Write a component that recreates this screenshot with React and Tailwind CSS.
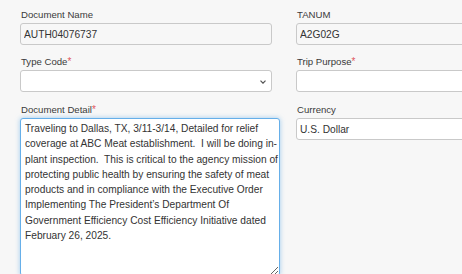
import React from 'react';

const detail =
  'Traveling to Dallas, TX, 3/11-3/14, Detailed for relief\n' +
  'coverage at ABC Meat establishment.  I will be doing in-\n' +
  'plant inspection.  This is critical to the agency mission of\n' +
  'protecting public health by ensuring the safety of meat\n' +
  'products and in compliance with the Executive Order\n' +
  'Implementing The President\u2019s Department Of\n' +
  'Government Efficiency Cost Efficiency Initiative dated\n' +
  'February 26, 2025.';

function Label({ children, required }) {
  return (
    <label className="block h-[12px] mb-[2px] pl-[1px] text-[9.6px] leading-[12px] text-[#3a3a3a] whitespace-nowrap">
      {children}
      {required && <span className="text-[#e0595e] text-[10px]">*</span>}
    </label>
  );
}

function TextField({ value = '', readOnly }) {
  return (
    <input
      type="text"
      readOnly
      defaultValue={value}
      className={`block w-full h-[22px] px-[3px] border border-[#c9c9c9] rounded-[3px] text-[10.2px] text-[#333] outline-none ${
        readOnly ? 'bg-[#f7f7f7]' : 'bg-white'
      }`}
    />
  );
}

function SelectField() {
  return (
    <div className="relative h-[22px] w-full border border-[#c9c9c9] rounded-[3px] bg-white">
      <svg
        className="absolute right-[5px] top-[9px] w-[6px] h-[4px] text-[#555]"
        viewBox="0 0 6 4"
        fill="none"
        stroke="currentColor"
        strokeWidth="1.2"
      >
        <path d="M0.5 0.6 L3 3.2 L5.5 0.6" />
      </svg>
    </div>
  );
}

export default function App() {
  return (
    <div className="w-[462px] h-[274px] overflow-hidden bg-[#f7f7f7] font-['Liberation_Sans',Arial,sans-serif]">
      <div className="flex gap-[24px] pl-[20px] pt-[9px]">
        <div className="w-[252px] shrink-0 flex flex-col">
          <div>
            <Label>Document Name</Label>
            <TextField value="AUTH04076737" readOnly />
          </div>
          <div className="mt-[11px]">
            <Label required>Type Code</Label>
            <SelectField />
          </div>
          <div className="mt-[12px]">
            <Label required>Document Detail</Label>
            <textarea
              readOnly
              wrap="off"
              defaultValue={detail}
              className="block w-[260px] h-[158px] pl-[4px] pt-[2px] border border-[#66afe9] rounded-[3px] bg-white text-[10.2px] leading-[15.3px] text-[#333] overflow-hidden outline-none shadow-[0_0_5px_rgba(102,175,233,0.6)]"
            />
          </div>
        </div>
        <div className="w-[252px] shrink-0 flex flex-col">
          <div>
            <Label>TANUM</Label>
            <TextField value="A2G02G" readOnly />
          </div>
          <div className="mt-[11px]">
            <Label required>Trip Purpose</Label>
            <TextField />
          </div>
          <div className="mt-[12px]">
            <Label>Currency</Label>
            <TextField value="U.S. Dollar" />
          </div>
        </div>
      </div>
    </div>
  );
}
